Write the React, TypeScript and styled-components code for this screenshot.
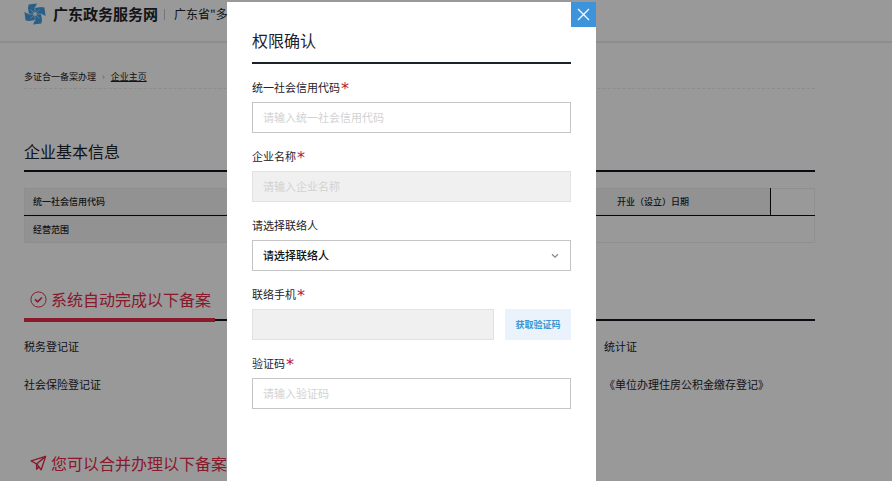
import React from "react";
import styled, { createGlobalStyle } from "styled-components";

const GlobalStyle = createGlobalStyle`
  *, *::before, *::after { box-sizing: border-box; }
  body {
    margin: 0;
    overflow: hidden;
    background: #fff;
    color: #1d232b;
    font-family: "Noto Sans CJK SC", "Noto Sans", sans-serif;
    font-size: 11px;
    line-height: 16px;
  }
  a { color: inherit; text-decoration: none; }
  h1, h2, p, ul { margin: 0; padding: 0; font-weight: 400; }
  input, select, button { font: inherit; margin: 0; }
`;

const Header = styled.header`
  display: flex;
  align-items: center;
  height: 43px;
  padding: 0 24px 13px;
  border-bottom: 2px solid #ececec;
  white-space: nowrap;
`;

const Brand = styled.a`
  display: flex;
  align-items: center;
  gap: 7px;
  font-size: 15px;
  font-weight: 700;
  line-height: 24px;
`;

const SiteName = styled.span`
  display: flex;
  align-items: center;
  font-size: 12px;

  &::before {
    content: "";
    width: 1px;
    height: 11px;
    margin: 0 9px 0 6px;
    background: #c4c4c4;
  }
`;

const Content = styled.main`
  margin: 0 77px 0 24px;
`;

const Breadcrumb = styled.nav`
  display: flex;
  gap: 6px;
  padding: 26px 0 3px;
  border-bottom: 1px dashed #ebebeb;
  font-size: 9px;
`;

const Separator = styled.span`
  color: #999;
`;

const UnderlinedLink = styled.a`
  text-decoration: underline;
`;

const SectionTitle = styled.h2`
  margin-top: 50px;
  padding-bottom: 7px;
  border-bottom: 2px solid #10161f;
  font-size: 16px;
  line-height: 24px;
`;

const InfoTable = styled.table`
  width: 100%;
  margin-top: 16px;
  border-collapse: separate;
  border-spacing: 0;
  table-layout: fixed;
  font-size: 9px;
  box-shadow: inset 0 0 0 1px #efefef;

  th, td {
    height: 27px;
    padding: 0 9px;
    font-weight: 500;
    text-align: left;
  }
  th { background: #f3f3f3; box-shadow: inset 0 0 0 1px #ededed; }
  tr:first-child th, tr:first-child td {
    height: 28px;
    border-bottom: 1px solid #0c0c0c;
  }
  th + td + th {
    padding-left: 28px;
    border-right: 1px solid #0c0c0c;
  }
`;

const TabBar = styled.div<{ $space: number }>`
  display: flex;
  margin-top: ${(p) => p.$space}px;
  border-bottom: 2px solid #10161f;
`;

const TabTitle = styled.h2`
  display: flex;
  align-items: center;
  gap: 4px;
  margin-bottom: -3px;
  padding: 0 4px 7px 6px;
  border-bottom: 4px solid #e62a48;
  color: #e62a48;
  font-size: 16px;
  line-height: 24px;
  white-space: nowrap;
`;

const FilingList = styled.ul`
  display: grid;
  grid-template-columns: 11fr 4fr;
  margin-top: 6px;
  list-style: none;
  line-height: 38px;
  white-space: nowrap;
`;

const Overlay = styled.div`
  position: fixed;
  inset: 0;
  display: flex;
  justify-content: center;
  padding: 2px 69px 0 0;
  background: rgba(0, 0, 0, 0.4);
`;

const Dialog = styled.section`
  position: relative;
  flex: 0 1 369px;
  padding: 26px 25px 0;
  background: #fff;
`;

const CloseButton = styled.button`
  position: absolute;
  top: 0;
  right: 0;
  display: grid;
  place-items: center;
  width: 25px;
  height: 25px;
  padding: 0;
  border: 0;
  background: #3d94db;
`;

const DialogTitle = styled.h1`
  margin-bottom: 15px;
  padding-bottom: 10px;
  border-bottom: 2px solid #1a2127;
  font-size: 16px;
  line-height: 24px;
`;

const Form = styled.form`
  display: grid;
  gap: 15px;
`;

const Field = styled.div`
  display: grid;
  gap: 7px;
`;

const Label = styled.label`
  display: flex;
  height: 16px;
`;

const Required = styled.span`
  padding-left: 1px;
  color: #b8183a;
  font-family: "DejaVu Sans", sans-serif;
  font-size: 16px;
  line-height: 20px;
`;

const TextInput = styled.input`
  width: 100%;
  min-width: 0;
  height: 31px;
  padding: 0 10px 2px;
  border: 1px solid #c4c4c4;
  border-radius: 0;
  background: #fff;
  color: #1d232b;

  &::placeholder { color: #d2d2d2; opacity: 1; }
  &:disabled { border-color: #e2e2e2; background: #f0f0f0; }
`;

const SelectWrap = styled.div`
  display: grid;
  align-items: center;

  select, svg { grid-area: 1 / 1; }
  svg { justify-self: end; margin-right: 12px; pointer-events: none; }
`;

const Select = styled.select`
  appearance: none;
  width: 100%;
  height: 31px;
  padding: 0 10px 2px;
  border: 1px solid #c4c4c4;
  border-radius: 0;
  background: #fff;
  color: #111;
  font-weight: 500;
`;

const InputRow = styled.div`
  display: flex;
  gap: 11px;
`;

const CodeButton = styled.button`
  flex: 0 0 66px;
  height: 31px;
  padding: 0;
  border: 0;
  background: #eaf3fc;
  color: #3a96cf;
  font-size: 9px;
  font-weight: 700;
`;

const Logo = () => (
  <svg width="22" height="22" viewBox="0 0 22 22" aria-hidden="true">
    <g fill="#459fe0">
      {[0, 90, 180, 270].map((angle) => (
        <path key={angle} transform={`rotate(${angle} 11 11)`} d="M11 11V4.4L13 0.4 4.6 1.6 4 5.2 5 11Z" />
      ))}
    </g>
    <g stroke="#bfe2fa" strokeWidth="0.8" fill="none">
      <path d="M11 4v14M4 11h14M6.5 6.5l9 9M15.5 6.5l-9 9" />
    </g>
    <circle cx="11" cy="11" r="1.8" fill="#e4f4ff" />
  </svg>
);

const CheckIcon = () => (
  <svg width="17" height="17" viewBox="0 0 17 17" fill="none" stroke="currentColor" aria-hidden="true">
    <circle cx="8.5" cy="8.5" r="7.6" />
    <path d="m5 8.3 2.6 2.5 4.3-4.3" strokeWidth="1.7" />
  </svg>
);

const PlaneIcon = () => (
  <svg width="17" height="17" viewBox="0 0 17 17" fill="none" stroke="currentColor" strokeWidth="1.4" strokeLinejoin="round" aria-hidden="true">
    <path d="M15.6 1.4 1.2 5.8l5.4 3.2 4.6 5.8Z" />
    <path d="M15.6 1.4 6.6 9v5.2l2.2-2.2" />
  </svg>
);

type FormFieldProps = {
  id: string;
  label: string;
  required?: boolean;
  children: React.ReactNode;
};

const FormField = ({ id, label, required, children }: FormFieldProps) => (
  <Field>
    <Label htmlFor={id}>
      {label}
      {required && <Required>*</Required>}
    </Label>
    {children}
  </Field>
);

const filings = ["税务登记证", "统计证", "社会保险登记证", "《单位办理住房公积金缴存登记》"];

export default function App() {
  return (
    <>
      <GlobalStyle />
      <Header>
        <Brand href="#">
          <Logo />
          广东政务服务网
        </Brand>
        <SiteName>广东省"多</SiteName>
      </Header>
      <Content>
        <Breadcrumb>
          <a href="#">多证合一备案办理</a>
          <Separator>›</Separator>
          <UnderlinedLink href="#">企业主页</UnderlinedLink>
        </Breadcrumb>
        <SectionTitle>企业基本信息</SectionTitle>
        <InfoTable>
          <colgroup>
            <col width="27%" />
            <col />
            <col width="23%" />
            <col width="44" />
          </colgroup>
          <tbody>
            <tr>
              <th scope="row">统一社会信用代码</th>
              <td />
              <th scope="row">开业（设立）日期</th>
              <td />
            </tr>
            <tr>
              <th scope="row">经营范围</th>
              <td colSpan={3} />
            </tr>
          </tbody>
        </InfoTable>
        <TabBar $space={44}>
          <TabTitle>
            <CheckIcon />
            系统自动完成以下备案
          </TabTitle>
        </TabBar>
        <FilingList>
          {filings.map((name) => (
            <li key={name}>{name}</li>
          ))}
        </FilingList>
        <TabBar $space={48}>
          <TabTitle>
            <PlaneIcon />
            您可以合并办理以下备案
          </TabTitle>
        </TabBar>
      </Content>
      <Overlay>
        <Dialog role="dialog" aria-modal="true" aria-labelledby="dialog-title">
          <CloseButton type="button" aria-label="关闭">
            <svg width="13" height="13" viewBox="0 0 13 13" stroke="#fff" strokeWidth="1.3" aria-hidden="true">
              <path d="m1 1 11 11M12 1 1 12" />
            </svg>
          </CloseButton>
          <DialogTitle id="dialog-title">权限确认</DialogTitle>
          <Form>
            <FormField id="credit-code" label="统一社会信用代码" required>
              <TextInput id="credit-code" placeholder="请输入统一社会信用代码" />
            </FormField>
            <FormField id="company" label="企业名称" required>
              <TextInput id="company" placeholder="请输入企业名称" disabled />
            </FormField>
            <FormField id="contact" label="请选择联络人">
              <SelectWrap>
                <Select id="contact">
                  <option>请选择联络人</option>
                </Select>
                <svg width="8" height="6" viewBox="0 0 8 6" fill="none" stroke="#8a8a8a" strokeWidth="1.3" aria-hidden="true">
                  <path d="m1 1.2 3 3 3-3" />
                </svg>
              </SelectWrap>
            </FormField>
            <FormField id="phone" label="联络手机" required>
              <InputRow>
                <TextInput id="phone" disabled />
                <CodeButton type="button">获取验证码</CodeButton>
              </InputRow>
            </FormField>
            <FormField id="code" label="验证码" required>
              <TextInput id="code" placeholder="请输入验证码" />
            </FormField>
          </Form>
        </Dialog>
      </Overlay>
    </>
  );
}
